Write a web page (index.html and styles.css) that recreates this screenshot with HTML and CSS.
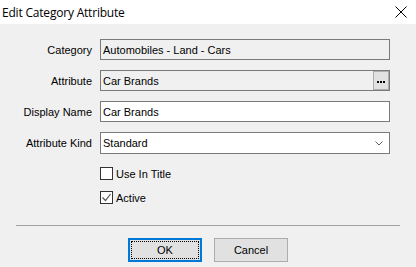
FILE: index.html
```html
<!DOCTYPE html>
<html>
<head>
<meta charset="utf-8">
<link rel="stylesheet" href="styles.css">
</head>
<body>
<div class="dialog">
  <div class="titlebar">
    <span class="title">Edit Category Attribute</span>
    <svg class="close" width="12" height="12" viewBox="0 0 12 12"><path d="M0.5 0.5 L11.5 11.5 M11.5 0.5 L0.5 11.5" stroke="#000" stroke-width="1" fill="none"/></svg>
  </div>
  <div class="content">
    <div class="form">
      <label class="lbl">Category</label>
      <div class="field ro">Automobiles - Land - Cars</div>
      <label class="lbl">Attribute</label>
      <div class="field ro">Car Brands<span class="dots"><svg width="8" height="2" viewBox="0 0 8 2"><rect x="0" y="0" width="2" height="2" fill="#000"/><rect x="3" y="0" width="2" height="2" fill="#000"/><rect x="6" y="0" width="2" height="2" fill="#000"/></svg></span></div>
      <label class="lbl">Display Name</label>
      <div class="field">Car Brands</div>
      <label class="lbl">Attribute Kind</label>
      <div class="field combo">Standard<svg class="chev" width="8" height="5" viewBox="0 0 8 5"><path d="M0.5 0.5 L4 4 L7.5 0.5" stroke="#606060" stroke-width="1" fill="none"/></svg></div>
    </div>
    <div class="checks">
      <div class="check"><span class="box"></span><span>Use In Title</span></div>
      <div class="check"><span class="box"><svg width="11" height="11" viewBox="0 0 11 11"><path d="M1.5 5.5 L4.5 8.5 L9.5 2" stroke="#555" stroke-width="1.2" fill="none"/></svg></span><span>Active</span></div>
    </div>
    <div class="sep"></div>
    <div class="buttons">
      <div class="btn default"><span class="focus">OK</span></div>
      <div class="btn">Cancel</div>
    </div>
  </div>
</div>
</body>
</html>
```

FILE: styles.css
```css
* { box-sizing: border-box; }
html, body { margin: 0; padding: 0; }
body {
  width: 416px;
  height: 267px;
  background: #f0f0f0;
  font-family: "Liberation Sans", Arial, sans-serif;
  font-size: 11px;
  color: #000;
  overflow: hidden;
}
.dialog { width: 416px; height: 267px; display: flex; flex-direction: column; }
.titlebar {
  height: 24px;
  background: #fff;
  display: flex;
  align-items: center;
  justify-content: space-between;
  padding: 0 9px 0 2px;
}
.title { font-size: 12px; font-family: "Open Sans", sans-serif; letter-spacing: -0.2px; }
.close { display: block; }
.content { padding: 15px 0 0 0; }
.form {
  display: grid;
  grid-template-columns: 92px 290px;
  column-gap: 8px;
  row-gap: 10px;
  align-items: center;
}
.lbl { text-align: right; }
.field {
  height: 21px;
  border: 1px solid #7a7a7a;
  background: #fff;
  padding: 0 0 0 2px;
  display: flex;
  align-items: center;
  position: relative;
}
.field.ro { background: #f0f0f0; }
.field.combo { height: 22px; justify-content: space-between; padding-right: 6px; }
.chev { display: block; margin-top: 1px; }
.dots {
  position: absolute;
  right: 0;
  top: 0;
  width: 16px;
  height: 19px;
  background: #e1e1e1;
  border: 1px solid #adadad;
  display: flex;
  align-items: center;
  justify-content: center;
}
.dots svg { display: block; margin-top: 2px; }
.checks { padding: 13px 0 0 100px; display: flex; flex-direction: column; gap: 11px; }
.check { display: flex; align-items: center; gap: 3px; height: 13px; }
.box {
  width: 13px; height: 13px;
  border: 1px solid #333;
  background: #fff;
  display: flex; align-items: center; justify-content: center;
}
.box svg { display: block; }
.sep { margin: 21px 16px 0 16px; height: 1px; background: #a0a0a0; }
.buttons { display: flex; justify-content: center; gap: 12px; padding: 12px 0 0 0; }
.btn {
  width: 74px; height: 24px;
  background: #e1e1e1;
  border: 1px solid #adadad;
  display: flex; align-items: center; justify-content: center;
}
.btn.default { border: 2px solid #0078d7; padding: 1px; }
.focus {
  flex: 1; align-self: stretch;
  border: 1px dotted #000;
  display: flex; align-items: center; justify-content: center;
}
```
